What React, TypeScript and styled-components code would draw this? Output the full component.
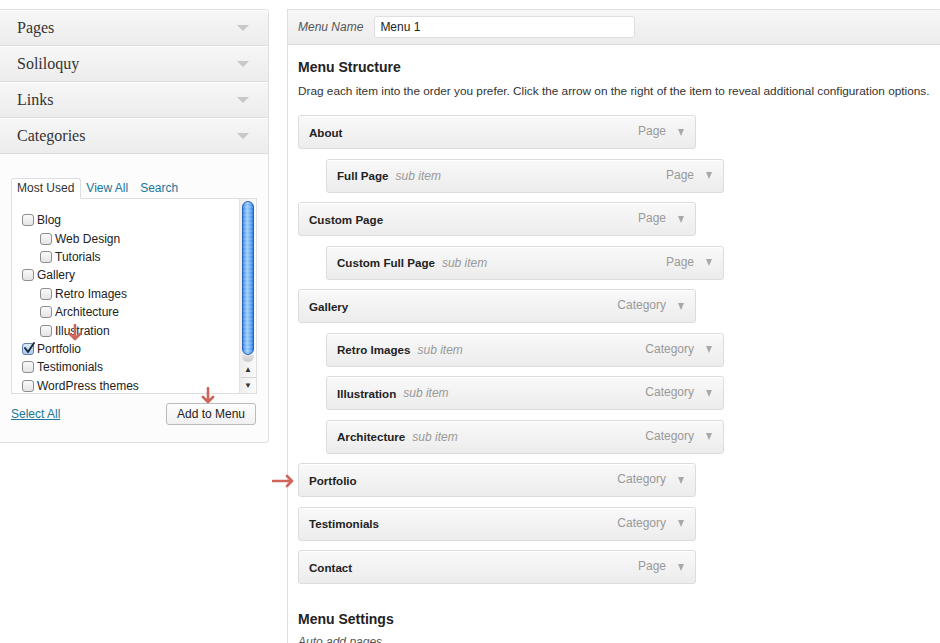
import React from "react";
import styled, { createGlobalStyle } from "styled-components";

const GlobalStyle = createGlobalStyle`
  html, body {
    margin: 0;
    padding: 0;
    background: #fff;
    font-family: "Liberation Sans", Arial, sans-serif;
    color: #333;
    overflow: hidden;
  }
`;

const Page = styled.div`
  display: flex;
  align-items: flex-start;
  gap: 18px;
  padding-top: 9px;
  width: 940px;
  height: 634px;
  position: relative;
`;

/* ---------- left column ---------- */

const Sidebar = styled.div`
  width: 268px;
  flex-shrink: 0;
  border: 1px solid #dfdfdf;
  border-left: none;
  border-radius: 0 4px 4px 0;
  background: #fbfbfb;
  position: relative;
`;

const AccordionHead = styled.div`
  height: 35px;
  display: flex;
  align-items: center;
  justify-content: space-between;
  padding: 0 19px 0 17px;
  border-bottom: 1px solid #dcdcdc;
  background: linear-gradient(to bottom, #f7f7f7, #ececec);
  box-shadow: inset 0 1px 0 #fff;
  font-family: "Liberation Serif", Georgia, serif;
  font-size: 16px;
  color: #333;
  &:first-child {
    border-radius: 0 4px 0 0;
  }
`;

const HeadCaret = styled.span`
  width: 0;
  height: 0;
  border-left: 6px solid transparent;
  border-right: 6px solid transparent;
  border-top: 6px solid #c8c8c8;
`;

const SectionBody = styled.div`
  padding: 24px 11px 17px 11px;
  background: #fcfcfc;
  border-radius: 0 0 4px 0;
`;

const Tabs = styled.div`
  display: flex;
  align-items: flex-end;
  margin-bottom: -1px;
  position: relative;
  z-index: 1;
`;

const Tab = styled.span<{ $active?: boolean }>`
  font-size: 12px;
  line-height: 17px;
  padding: 1px 6px 1px ${(p) => (p.$active ? "5px" : "4px")};
  border: 1px solid ${(p) => (p.$active ? "#dfdfdf" : "transparent")};
  border-bottom: 1px solid ${(p) => (p.$active ? "#fff" : "transparent")};
  border-radius: 3px 3px 0 0;
  background: ${(p) => (p.$active ? "#fff" : "transparent")};
  color: ${(p) => (p.$active ? "#333" : "#21759b")};
`;

const ListBox = styled.div`
  height: 194px;
  border: 1px solid #dfdfdf;
  background: #fff;
  display: flex;
  overflow: hidden;
`;

const CheckList = styled.div`
  flex: 1;
  padding: 12px 0 0 10px;
  display: flex;
  flex-direction: column;
`;

const CheckRow = styled.div<{ $indent?: boolean }>`
  display: flex;
  align-items: center;
  gap: 3px;
  height: 18.4px;
  flex-shrink: 0;
  padding-left: ${(p) => (p.$indent ? "18px" : "0")};
  font-size: 12px;
  color: #222;
`;

const Box = styled.span<{ $checked?: boolean }>`
  width: 10px;
  height: 10px;
  border: 1px solid #8e8e8e;
  border-radius: 3px;
  background: linear-gradient(to bottom, #fafafa, #e4e4e4);
  position: relative;
  flex-shrink: 0;
  ${(p) => p.$checked && "border-color: #5d7fa8; background: linear-gradient(to bottom, #dbe9f8, #aecbeb);"}
`;

const Tick = styled.svg`
  position: absolute;
  left: -1px;
  top: -3px;
`;

const ScrollTrack = styled.div`
  width: 16px;
  border-left: 1px solid #e2e2e2;
  background: linear-gradient(to right, #ededed, #fafafa);
  display: flex;
  flex-direction: column;
  align-items: center;
  padding-top: 2px;
`;

const Thumb = styled.div`
  width: 12px;
  height: 155px;
  border-radius: 6px;
  border: 1px solid #2a62c4;
  box-sizing: border-box;
  background: repeating-linear-gradient(
      to bottom,
      rgba(255, 255, 255, 0.12) 0 2px,
      rgba(255, 255, 255, 0) 2px 4px
    ),
    linear-gradient(to right, #3f86e6, #9fd0fb 40%, #6db3f6 70%, #2f7ae0);
`;

const ThumbEnd = styled.div`
  width: 12px;
  height: 7px;
  border-radius: 0 0 6px 6px;
  background: linear-gradient(to bottom, #e4e4e4, #c8c8c8);
`;

const Spacer = styled.div`
  flex: 1;
`;

const ScrollButton = styled.div`
  width: 15px;
  height: 15px;
  display: flex;
  align-items: center;
  justify-content: center;
  font-size: 8px;
  color: #333;
  & + & {
    border-top: 1px solid #d4d4d4;
  }
`;

const SectionFooter = styled.div`
  display: flex;
  align-items: center;
  justify-content: space-between;
  margin-top: 9px;
`;

const LinkText = styled.a`
  font-size: 12px;
  color: #21759b;
  text-decoration: underline;
`;

const Button = styled.button`
  font-family: "Liberation Sans", Arial, sans-serif;
  font-size: 12px;
  color: #222;
  height: 22px;
  padding: 0 10px;
  margin-right: 1px;
  border: 1px solid #bbb;
  border-radius: 3px;
  background: linear-gradient(to bottom, #fefefe, #f0f0f0);
`;

/* ---------- right column ---------- */

const Main = styled.div`
  flex: 1;
  align-self: stretch;
  border-left: 1px solid #dfdfdf;
  border-top: 1px solid #dfdfdf;
  margin-bottom: -20px;
`;

const MainHeader = styled.div`
  height: 34px;
  display: flex;
  align-items: center;
  gap: 11px;
  padding-left: 10px;
  background: linear-gradient(to bottom, #f7f7f7, #ececec);
  border-bottom: 1px solid #dcdcdc;
`;

const FieldLabel = styled.label`
  font-size: 12px;
  font-style: italic;
  color: #555;
`;

const TextInput = styled.div`
  width: 254px;
  height: 20px;
  display: flex;
  align-items: center;
  padding-left: 5px;
  border: 1px solid #dfdfdf;
  border-radius: 3px;
  background: #fff;
  font-size: 12px;
  color: #222;
`;

const MainBody = styled.div`
  padding: 14px 10px 0 10px;
`;

const SectionTitle = styled.h3`
  margin: 0;
  font-size: 14px;
  line-height: 17px;
  font-weight: bold;
  color: #222;
`;

const Description = styled.p`
  margin: 7px 0 16px 0;
  font-size: 11.8px;
  line-height: 16px;
  color: #333;
  white-space: nowrap;
`;

const ItemList = styled.div`
  display: flex;
  flex-direction: column;
  gap: 9.5px;
`;

const MenuItem = styled.div<{ $sub?: boolean }>`
  width: 398px;
  height: 34px;
  box-sizing: border-box;
  margin-left: ${(p) => (p.$sub ? "28px" : "0")};
  display: flex;
  align-items: center;
  padding: 0 11px 0 10px;
  border: 1px solid #dcdcdc;
  border-radius: 3px;
  background: linear-gradient(to bottom, #f9f9f9, #ececec);
  box-shadow: inset 0 1px 0 #fff;
`;

const ItemTitle = styled.span`
  font-size: 11.6px;
  font-weight: bold;
  color: #222;
`;

const SubLabel = styled.span`
  margin-left: 7px;
  font-size: 12px;
  font-style: italic;
  color: #999;
`;

const ItemType = styled.span`
  margin-left: auto;
  font-size: 12px;
  color: #999;
  margin-top: -2px;
`;

const ItemCaret = styled.span`
  margin-left: 12px;
  width: 0;
  height: 0;
  border-left: 3.5px solid transparent;
  border-right: 3.5px solid transparent;
  border-top: 7px solid #a8a8a8;
`;

const SettingsTitle = styled(SectionTitle)`
  margin-top: 27px;
`;

const Hint = styled.div`
  margin-top: 7px;
  font-size: 12px;
  font-style: italic;
  color: #555;
`;

/* ---------- annotation arrows ---------- */

const Annotation = styled.svg<{ $x: number; $y: number }>`
  position: absolute;
  left: ${(p) => p.$x}px;
  top: ${(p) => p.$y}px;
  pointer-events: none;
`;

const DownArrow = ({ x, y }: { x: number; y: number }) => (
  <Annotation $x={x} $y={y} width="14" height="17" viewBox="0 0 14 17">
    <path d="M7 1 V14.5 M2 10 L7 15 L12 10" fill="none" stroke="#d0665b" strokeWidth="2.6" strokeLinecap="round" strokeLinejoin="round" />
  </Annotation>
);

const RightArrow = ({ x, y }: { x: number; y: number }) => (
  <Annotation $x={x} $y={y} width="22" height="14" viewBox="0 0 22 14">
    <path d="M1 7 H19.5 M15 2 L20 7 L15 12" fill="none" stroke="#d0665b" strokeWidth="2.6" strokeLinecap="round" strokeLinejoin="round" />
  </Annotation>
);

const categories = [
  { label: "Blog" },
  { label: "Web Design", indent: true },
  { label: "Tutorials", indent: true },
  { label: "Gallery" },
  { label: "Retro Images", indent: true },
  { label: "Architecture", indent: true },
  { label: "Illustration", indent: true },
  { label: "Portfolio", checked: true },
  { label: "Testimonials" },
  { label: "WordPress themes" },
];

const menuItems = [
  { title: "About", type: "Page" },
  { title: "Full Page", type: "Page", sub: true },
  { title: "Custom Page", type: "Page" },
  { title: "Custom Full Page", type: "Page", sub: true },
  { title: "Gallery", type: "Category" },
  { title: "Retro Images", type: "Category", sub: true },
  { title: "Illustration", type: "Category", sub: true },
  { title: "Architecture", type: "Category", sub: true },
  { title: "Portfolio", type: "Category" },
  { title: "Testimonials", type: "Category" },
  { title: "Contact", type: "Page" },
];

export default function App() {
  return (
    <>
      <GlobalStyle />
      <Page>
        <Sidebar>
          {["Pages", "Soliloquy", "Links", "Categories"].map((name) => (
            <AccordionHead key={name}>
              {name}
              <HeadCaret />
            </AccordionHead>
          ))}
          <SectionBody>
            <Tabs>
              <Tab $active>Most Used</Tab>
              <Tab>View All</Tab>
              <Tab>Search</Tab>
            </Tabs>
            <ListBox>
              <CheckList>
                {categories.map((c) => (
                  <CheckRow key={c.label} $indent={c.indent}>
                    <Box $checked={c.checked}>
                      {c.checked && (
                        <Tick width="14" height="14" viewBox="0 0 14 14">
                          <path d="M3 7 L6 11 L12 2" fill="none" stroke="#1b2a44" strokeWidth="2" strokeLinecap="round" strokeLinejoin="round" />
                        </Tick>
                      )}
                    </Box>
                    {c.label}
                  </CheckRow>
                ))}
              </CheckList>
              <ScrollTrack>
                <Thumb />
                <ThumbEnd />
                <Spacer />
                <ScrollButton>▲</ScrollButton>
                <ScrollButton>▼</ScrollButton>
              </ScrollTrack>
            </ListBox>
            <SectionFooter>
              <LinkText>Select All</LinkText>
              <Button>Add to Menu</Button>
            </SectionFooter>
          </SectionBody>
        </Sidebar>

        <Main>
          <MainHeader>
            <FieldLabel>Menu Name</FieldLabel>
            <TextInput>Menu 1</TextInput>
          </MainHeader>
          <MainBody>
            <SectionTitle>Menu Structure</SectionTitle>
            <Description>
              Drag each item into the order you prefer. Click the arrow on the right of the item to reveal additional configuration options.
            </Description>
            <ItemList>
              {menuItems.map((m) => (
                <MenuItem key={m.title} $sub={m.sub}>
                  <ItemTitle>{m.title}</ItemTitle>
                  {m.sub && <SubLabel>sub item</SubLabel>}
                  <ItemType>{m.type}</ItemType>
                  <ItemCaret />
                </MenuItem>
              ))}
            </ItemList>
            <SettingsTitle>Menu Settings</SettingsTitle>
            <Hint>Auto add pages</Hint>
          </MainBody>
        </Main>

        <DownArrow x={68} y={324} />
        <DownArrow x={201} y={387} />
        <RightArrow x={272} y={474} />
      </Page>
    </>
  );
}
